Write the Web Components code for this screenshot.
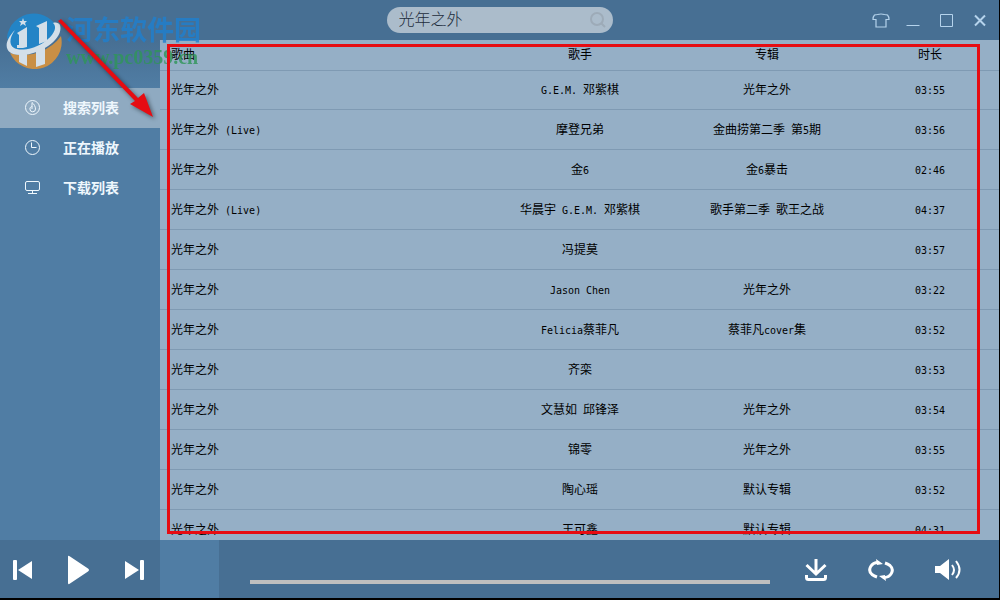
<!DOCTYPE html>
<html lang="zh-CN">
<head>
<meta charset="utf-8">
<title>光年之外</title>
<style>
  html, body { height: 100%; margin: 0; background: #000; }
  body {
    --barra: #476f93;
    --lateral: #507da4;
    --activo: #8faac1;
    --lista: #95afc6;
    --linea: #7f9ab3;
    font-family: "Liberation Sans", "Noto Sans CJK SC", sans-serif;
    font-size: 12px;
    color: #000;
  }
</style>
</head>
<body>
<music-app></music-app>

<script>
const SONGS = [
  ['光年之外',        'G.E.M. 邓紫棋',        '光年之外',            '03:55'],
  ['光年之外 (Live)', '摩登兄弟',             '金曲捞第二季 第5期',  '03:56'],
  ['光年之外',        '金6',                  '金6暴击',             '02:46'],
  ['光年之外 (Live)', '华晨宇 G.E.M. 邓紫棋', '歌手第二季 歌王之战', '04:37'],
  ['光年之外',        '冯提莫',               '',                    '03:57'],
  ['光年之外',        'Jason Chen',           '光年之外',            '03:22'],
  ['光年之外',        'Felicia蔡菲凡',        '蔡菲凡cover集',       '03:52'],
  ['光年之外',        '齐栾',                 '',                    '03:53'],
  ['光年之外',        '文慧如 邱锋泽',        '光年之外',            '03:54'],
  ['光年之外',        '锦零',                 '光年之外',            '03:55'],
  ['光年之外',        '陶心瑶',               '默认专辑',            '03:52'],
  ['光年之外',        '王可鑫',               '默认专辑',            '04:31'],
];

// half-width runs get the monospace face
const halfWidth = text => text.replace(/[\x20-\x7e]+/g, m => `<span class="half">${m}</span>`);

class SearchBox extends HTMLElement {
  connectedCallback() {
    this.attachShadow({ mode: 'open' }).innerHTML = `
      <style>
        :host { display: block; width: 226px; }
        form {
          display: flex; align-items: center; height: 26px; margin: 0;
          padding: 0 6px 0 12px; box-sizing: border-box;
          background: #abbccb; border-radius: 13px;
        }
        input {
          flex: 1; min-width: 0; padding: 0 0 4px; border: 0; outline: 0; background: none;
          font: 300 16px "Noto Sans CJK SC", sans-serif; line-height: 22px; height: 26px;
          box-sizing: border-box; color: #1d2d3c;
        }
        button { display: flex; padding: 0; border: 0; background: none; color: #9dabb8; cursor: pointer; }
      </style>
      <form>
        <input type="text" value="${this.getAttribute('value') || ''}" aria-label="搜索">
        <button type="button" aria-label="搜索">
          <svg width="18" height="18" viewBox="0 0 18 18" fill="none" stroke="currentColor" stroke-width="2">
            <circle cx="8" cy="8" r="6"/><path d="M12.5 12.5L16 16"/>
          </svg>
        </button>
      </form>
    `;
  }
}

class TitleBar extends HTMLElement {
  connectedCallback() {
    this.attachShadow({ mode: 'open' }).innerHTML = `
      <style>
        :host {
          display: grid; grid-template-columns: 1fr auto 1fr; align-items: center;
          height: 40px; background: var(--barra);
        }
        .ventana { grid-column: 3; display: flex; justify-content: flex-end; gap: 15px; padding-right: 10px; }
        button { display: flex; padding: 0; border: 0; background: none; color: #b5d3ec; cursor: pointer; }
      </style>
      <span></span>
      <slot></slot>
      <div class="ventana">
        <button aria-label="皮肤">
          <svg width="18" height="20" viewBox="0 0 18 20" fill="none" stroke="currentColor" stroke-width="1.2">
            <path d="M5.500 4.500q3.500-1 7 0l3 .500q1.500 1.500 1.500 4.500h-3v7.500h-10v-7.500h-3q0-3 1.500-4.500z"/>
          </svg>
        </button>
        <button aria-label="最小化">
          <svg width="16" height="20" viewBox="0 0 16 20" stroke="currentColor"><path d="M1.500 15.500h13"/></svg>
        </button>
        <button aria-label="最大化">
          <svg width="20" height="20" viewBox="0 0 20 20" fill="none" stroke="currentColor"><path d="M4.500 4.500h12v12h-12z"/></svg>
        </button>
        <button aria-label="关闭">
          <svg width="18" height="20" viewBox="0 0 18 20" stroke="currentColor" stroke-width="2"><path d="M4 5.500l10 10M14 5.500l-10 10"/></svg>
        </button>
      </div>
    `;
  }
}

class NavItem extends HTMLElement {
  connectedCallback() {
    this.attachShadow({ mode: 'open' }).innerHTML = `
      <style>
        :host { display: block; }
        a {
          display: flex; align-items: center; gap: 22px; height: 40px; padding-left: 24px;
          color: #eef7fd; text-decoration: none;
          font-size: 14px; font-weight: 700; line-height: 20px;
        }
        :host([active]) a { background: var(--activo); }
      </style>
      <a href="#"><slot name="icon"></slot><slot></slot></a>
    `;
  }
}

class SideBar extends HTMLElement {
  connectedCallback() {
    this.attachShadow({ mode: 'open' }).innerHTML = `
      <style>
        :host {
          display: block; box-sizing: border-box; padding-top: 48px;
          background: linear-gradient(var(--barra), var(--lateral) 48px);
        }
        svg { fill: none; stroke: #eef7fd; }
      </style>
      <nav aria-label="列表">
        <nav-item active>
          <svg slot="icon" width="17" height="17" viewBox="0 0 17 17">
            <circle cx="8.500" cy="7.500" r="7"/>
            <path d="M8 2.500c2 1.500 3.500 4 3.500 6.500a2.800 2.800 0 0 1-5.600 0c0-1.500 1-2.500 2.300-2.500M8 2.500v6.500"/>
          </svg>搜索列表
        </nav-item>
        <nav-item>
          <svg slot="icon" width="17" height="17" viewBox="0 0 17 17">
            <circle cx="8.500" cy="7.500" r="7"/><path d="M7.500 2.500v5h5"/>
          </svg>正在播放
        </nav-item>
        <nav-item>
          <svg slot="icon" width="17" height="17" viewBox="0 0 17 17">
            <rect x="1.500" y="1.500" width="14" height="9" rx="1.500"/><path d="M8.500 10.500v3M4 13.500h9"/>
          </svg>下载列表
        </nav-item>
      </nav>
    `;
  }
}

class SongList extends HTMLElement {
  connectedCallback() {
    this.attachShadow({ mode: 'open' }).innerHTML = `
      <style>
        :host { display: block; min-height: 0; overflow: hidden; background: var(--lista); }
        table { width: 100%; table-layout: fixed; border-collapse: separate; border-spacing: 0; }
        th, td {
          box-sizing: border-box; padding: 0; height: 40px;
          font-size: 12px; font-weight: 400; line-height: 16px;
          text-align: center; white-space: nowrap;
        }
        th { height: 30px; }
        td { border-bottom: 1px solid var(--linea); }
        tbody tr:first-child td { border-top: 1px solid var(--linea); }
        th:first-child, td:first-child { padding-left: 11px; text-align: left; }
        .cantante { width: 186px; }
        .album { width: 188px; }
        .tiempo { width: 138px; }
        .half { font-family: "DejaVu Sans Mono", monospace; font-size: 10px; line-height: 10px; }
      </style>
      <table>
        <thead>
          <tr><th>歌曲</th><th class="cantante">歌手</th><th class="album">专辑</th><th class="tiempo">时长</th></tr>
        </thead>
        <tbody>
          ${SONGS.map(s => `<tr>${s.map(c => `<td>${halfWidth(c)}</td>`).join('')}</tr>`).join('')}
        </tbody>
      </table>
    `;
  }
}

class PlayerBar extends HTMLElement {
  connectedCallback() {
    this.attachShadow({ mode: 'open' }).innerHTML = `
      <style>
        :host { display: flex; height: 58px; background: var(--barra); }
        button { display: flex; padding: 0; border: 0; background: none; color: #fff; cursor: pointer; }
        svg { fill: currentColor; }
        .controles {
          width: 160px; box-sizing: border-box; padding: 2px 15px 0 12px; flex-shrink: 0;
          display: flex; align-items: center; justify-content: space-between;
        }
        .caratula { width: 59px; flex-shrink: 0; background: var(--lateral); }
        input {
          appearance: none; -webkit-appearance: none; flex: 1; min-width: 0; height: 4px;
          margin: 40px 34px 0 31px; background: #bfbfbf;
        }
        input::-webkit-slider-thumb { -webkit-appearance: none; width: 0; height: 4px; }
        .acciones { display: flex; align-items: center; gap: 39px; padding: 2px 37px 0 0; }
      </style>
      <div class="controles">
        <button aria-label="上一首">
          <svg width="21" height="22" viewBox="0 0 21 22"><rect x="1" y="1" width="4" height="20" rx="1"/><path d="M20 2v18L6 11z"/></svg>
        </button>
        <button aria-label="播放">
          <svg width="24" height="30" viewBox="0 0 24 30"><path d="M1 1.500Q1 0 3 1.500L21 13.500Q23 15 21 16.500L3 28.500Q1 30 1 28z"/></svg>
        </button>
        <button aria-label="下一首">
          <svg width="21" height="22" viewBox="0 0 21 22"><rect x="16" y="1" width="4" height="20" rx="1"/><path d="M1 2v18L15 11z"/></svg>
        </button>
      </div>
      <div class="caratula"></div>
      <input type="range" min="0" max="100" value="0" aria-label="进度">
      <div class="acciones">
        <button aria-label="下载">
          <svg width="24" height="24" viewBox="0 0 24 24" style="fill:none" stroke="currentColor" stroke-width="3">
            <path d="M12 1v15M2.500 7l9.500 9 9.500-9M2.500 17v2.500q0 2 2 2h15q2 0 2-2v-2.500"/>
          </svg>
        </button>
        <button aria-label="循环">
          <svg width="28" height="24" viewBox="0 0 28 24">
            <path d="M12 4.500C4 4 0 12 5 16.500q2 1.500 5 2.500M16 19.500C24 20 28 12 23 7.500q-2-1.500-5-2.500" fill="none" stroke="currentColor" stroke-width="3"/>
            <path d="M9 1l7 5-6 1zM19 23l-7-5 6-1z"/>
          </svg>
        </button>
        <button aria-label="音量">
          <svg width="28" height="24" viewBox="0 0 28 24">
            <path d="M1 8h5l9-7v21l-9-7H1z"/>
            <path d="M18 7q4 5 0 10M22 3q7 9 0 17" fill="none" stroke="currentColor" stroke-width="2"/>
          </svg>
        </button>
      </div>
    `;
  }
}

// watermark, red frame and arrow that lie over the window
class MarkLayer extends HTMLElement {
  connectedCallback() {
    this.attachShadow({ mode: 'open' }).innerHTML = `
      <style>
        :host { position: absolute; inset: 0; pointer-events: none; }
        .marca { position: absolute; left: 4px; top: 11px; display: flex; gap: 4px; }
        .textos { display: flex; flex-direction: column; opacity: 0.8; }
        .nombre { font: 700 27px "Noto Sans CJK SC", sans-serif; line-height: 36px; color: #1f80cf; }
        .sitio { font: 700 20px "Liberation Serif", serif; line-height: 20px; color: #2f9658; }
        .marco { position: absolute; inset: 44px 20px 66px 167px; border: 3px solid #e60c12; }
        .flecha { position: absolute; left: 50px; top: 10px; filter: drop-shadow(2px 2px 2px rgba(0, 0, 0, 0.45)); }
      </style>
      <div class="marca">
        <svg width="58" height="58" viewBox="0 0 58 58">
          <path d="M3 26A27 27 0 0 1 55 20Q50 32 34 37 14 42 5 34z" fill="#2384c6"/>
          <path d="M6 42Q20 47 36 41 50 35 57 25A27 27 0 0 1 6 42z" fill="#c98f45"/>
          <path d="M11 19C-2 32 0 45 18 44 38 43 60 27 56 14 55 12 52 11 49 12 56 18 44 32 28 37 10 42 0 35 11 19z" fill="#d3dfe9"/>
          <path d="M13 22l10-6v20l-4 1h-6v-3h2V24zM32 15l11-5v20l-8 3V17zM15 43l8-1v13l-8-4zM32 39l9-5v19l-9 3z" fill="#d3dfe9"/>
          <path d="M19 7l1 3h3l-2 2 1 3-3-2-3 2 1-3-2-2h3z" fill="#d3dfe9"/>
        </svg>
        <div class="textos"><span class="nombre">河东软件园</span><span class="sitio">www.pc0359.cn</span></div>
      </div>
      <div class="marco"></div>
      <svg class="flecha" width="120" height="120" viewBox="0 0 120 120" fill="#e60c12">
        <path d="M8 11l3-2 77 79 6-5 9 24-23-13 5-3z"/>
      </svg>
    `;
  }
}

class MusicApp extends HTMLElement {
  connectedCallback() {
    this.attachShadow({ mode: 'open' }).innerHTML = `
      <style>
        :host {
          position: relative; display: flex; flex-direction: column;
          height: 100vh; box-sizing: border-box; padding: 0 1px 2px 0; overflow: hidden;
        }
        .cuerpo { flex: 1; min-height: 0; display: grid; grid-template-columns: 160px 1fr; grid-template-rows: 100%; }
      </style>
      <title-bar><search-box value="光年之外"></search-box></title-bar>
      <div class="cuerpo">
        <side-bar></side-bar>
        <song-list></song-list>
      </div>
      <player-bar></player-bar>
      <mark-layer></mark-layer>
    `;
  }
}

customElements.define('search-box', SearchBox);
customElements.define('title-bar', TitleBar);
customElements.define('nav-item', NavItem);
customElements.define('side-bar', SideBar);
customElements.define('song-list', SongList);
customElements.define('player-bar', PlayerBar);
customElements.define('mark-layer', MarkLayer);
customElements.define('music-app', MusicApp);
</script>
</body>
</html>
